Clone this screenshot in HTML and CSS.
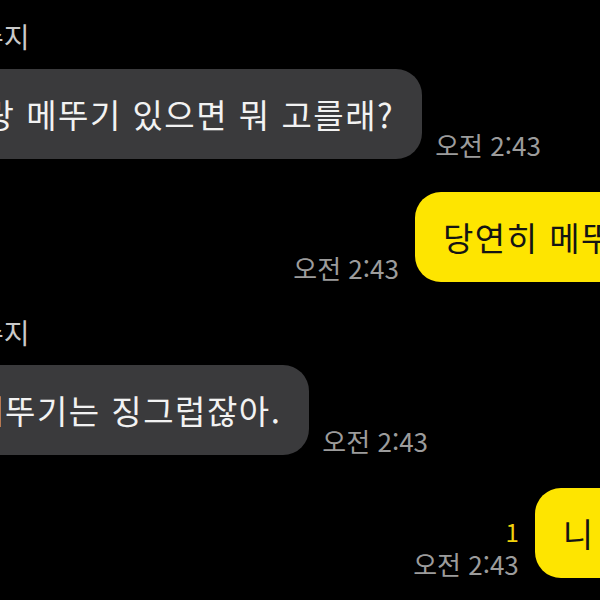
FILE: index.html
```html
<!DOCTYPE html>
<html lang="ko">
<head>
<meta charset="utf-8">
<link rel="stylesheet" href="styles.css">
</head>
<body>
<div class="chat">
  <div class="msg in first">
    <div class="name">수지</div>
    <div class="line">
      <div class="bubble gray">짜장이랑 메뚜기 있으면 뭐 고를래?</div>
      <div class="meta"><span class="time">오전 2:43</span></div>
    </div>
  </div>
  <div class="msg out">
    <div class="line">
      <div class="meta"><span class="time">오전 2:43</span></div>
      <div class="bubble yellow">당연히 메뚜기지!!</div>
    </div>
  </div>
  <div class="msg in">
    <div class="name">수지</div>
    <div class="line">
      <div class="bubble gray">아냐, 메뚜기는 징그럽잖아.</div>
      <div class="meta"><span class="time">오전 2:43</span></div>
    </div>
  </div>
  <div class="msg out">
    <div class="line">
      <div class="meta"><span class="unread">1</span><span class="time">오전 2:43</span></div>
      <div class="bubble yellow">니 먹어라</div>
    </div>
  </div>
</div>
</body>
</html>
```
FILE: styles.css
```css
html, body {
  margin: 0;
  padding: 0;
  background: #000;
  width: 600px;
  height: 600px;
  overflow: hidden;
}
.chat {
  font-family: "Noto Sans CJK KR", "Noto Sans", sans-serif;
  display: flex;
  flex-direction: column;
  padding-top: 21px;
  margin-left: -140px;
  margin-right: -129px;
}
.msg {
  display: flex;
  flex-direction: column;
  margin-top: 35px;
}
.msg.first { margin-top: 0; }
.msg + .msg.out { margin-top: 33px; }
.msg.out { align-items: flex-end; }
.msg.in { align-items: flex-start; }
.name {
  font-size: 28px;
  line-height: 30px;
  color: #c9c9c9;
  margin-left: 118px;
  margin-bottom: 18px;
}
.line {
  display: flex;
  align-items: flex-end;
  gap: 13px;
}
.out .line { gap: 16px; }
.bubble {
  font-size: 33px;
  line-height: 42px;
  letter-spacing: 1.5px;
  padding: 24px 28px;
  border-radius: 26px;
  white-space: nowrap;
}
.gray {
  background: #3a3a3c;
  color: #f2f2f2;
}
.yellow {
  background: #fee500;
  color: #141414;
}
.meta {
  display: flex;
  flex-direction: column;
  align-items: flex-end;
}
.time {
  font-size: 26px;
  line-height: 28px;
  color: #9c9c9c;
  white-space: nowrap;
}
.unread {
  font-size: 24px;
  line-height: 20px;
  color: #f2d20c;
  margin-bottom: 8px;
}
```
